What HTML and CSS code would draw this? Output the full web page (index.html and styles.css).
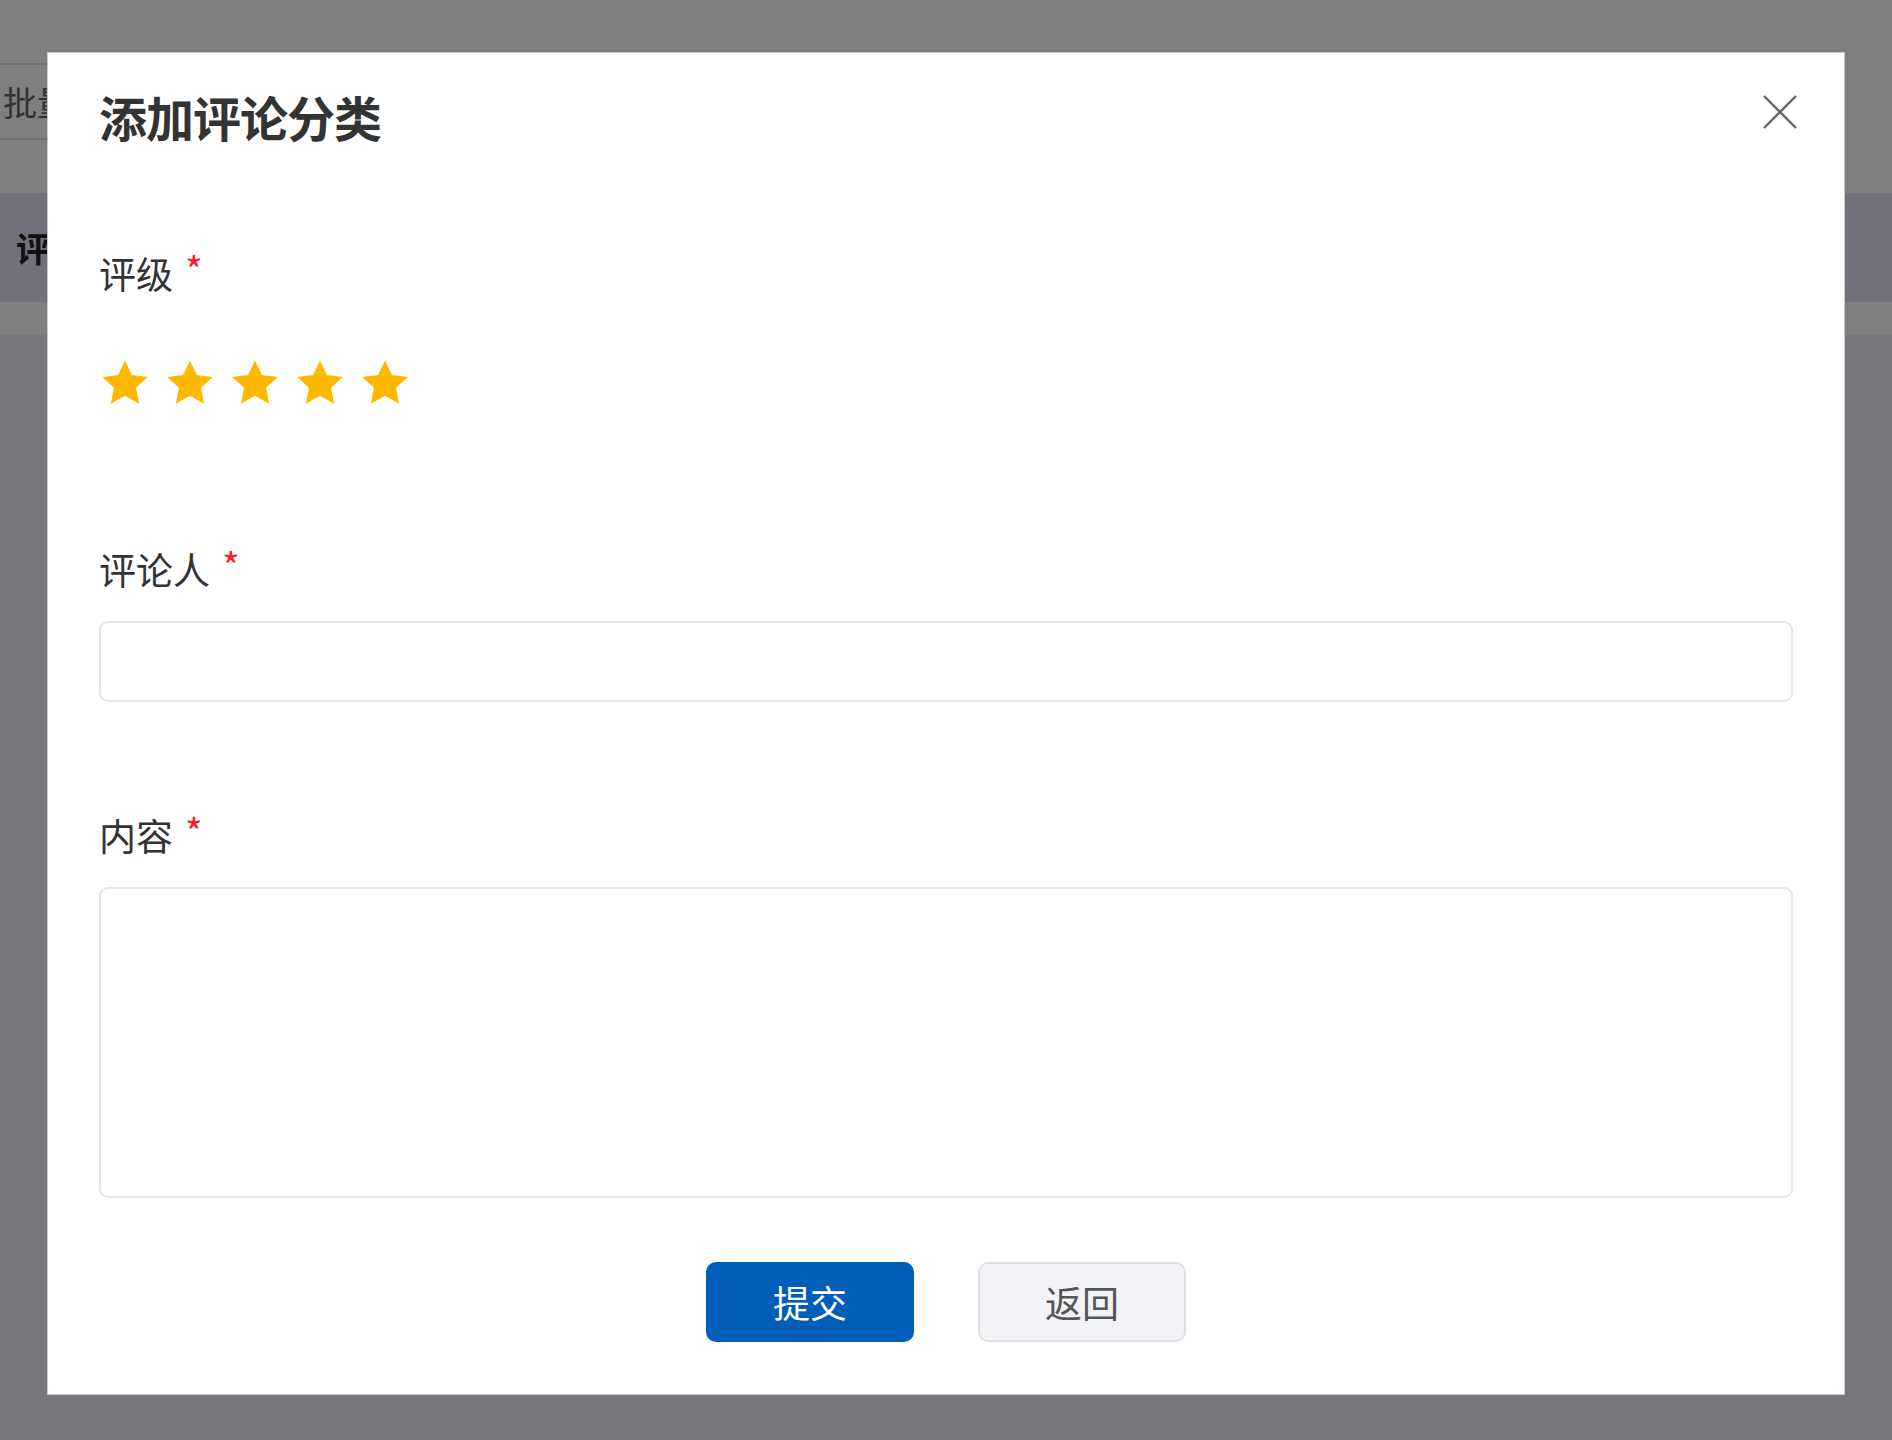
FILE: index.html
```html
<!DOCTYPE html>
<html lang="zh-CN">
<head>
  <meta charset="UTF-8"/>
  <meta name="viewport" content="width=device-width, initial-scale=1.0"/>
  <title>添加评论分类</title>
  <link rel="stylesheet" href="styles.css">
</head>
<body>

  <div class="page">
    <div class="toolbar">
      <div class="batch-btn">批量删除</div>
    </div>
    <div class="table-head">
      <span>评论人</span>
    </div>
    <div class="table-row"></div>
  </div>

  <div class="mask">
    <div class="modal">
      <div class="modal-header">
        <h2>添加评论分类</h2>
        <button class="close-btn" aria-label="关闭">
          <svg width="34" height="34" viewBox="0 0 34 34">
            <path d="M1 1 L33 33 M33 1 L1 33" stroke="#666" stroke-width="2.4" fill="none"/>
          </svg>
        </button>
      </div>

      <div class="form-item">
        <label class="form-label">评级<span class="required">*</span></label>
        <div class="rate">
          <svg class="star" viewBox="0 0 24 24"><path d="M12 1.2l3.3 7 7.6.9-5.6 5.2 1.5 7.6L12 18.1l-6.8 3.8 1.5-7.6L1.1 9.1l7.6-.9z"/></svg>
          <svg class="star" viewBox="0 0 24 24"><path d="M12 1.2l3.3 7 7.6.9-5.6 5.2 1.5 7.6L12 18.1l-6.8 3.8 1.5-7.6L1.1 9.1l7.6-.9z"/></svg>
          <svg class="star" viewBox="0 0 24 24"><path d="M12 1.2l3.3 7 7.6.9-5.6 5.2 1.5 7.6L12 18.1l-6.8 3.8 1.5-7.6L1.1 9.1l7.6-.9z"/></svg>
          <svg class="star" viewBox="0 0 24 24"><path d="M12 1.2l3.3 7 7.6.9-5.6 5.2 1.5 7.6L12 18.1l-6.8 3.8 1.5-7.6L1.1 9.1l7.6-.9z"/></svg>
          <svg class="star" viewBox="0 0 24 24"><path d="M12 1.2l3.3 7 7.6.9-5.6 5.2 1.5 7.6L12 18.1l-6.8 3.8 1.5-7.6L1.1 9.1l7.6-.9z"/></svg>
        </div>
      </div>

      <div class="form-item">
        <label class="form-label">评论人<span class="required">*</span></label>
        <input class="form-input" type="text"/>
      </div>

      <div class="form-item">
        <label class="form-label">内容<span class="required">*</span></label>
        <textarea class="form-textarea"></textarea>
      </div>

      <div class="modal-footer">
        <button class="btn btn-primary">提交</button>
        <button class="btn btn-default">返回</button>
      </div>
    </div>
  </div>

</body>
</html>
```

FILE: styles.css
```css
* {
  box-sizing: border-box;
  margin: 0;
  padding: 0;
}

body {
  font-family: "Noto Sans CJK SC", "Noto Sans", sans-serif;
  background: #eef0f6;
  color: #333;
  height: 1440px;
  overflow: hidden;
}

/* page behind the dialog */
.page {
  background: #fff;
  padding-top: 63px;
}

.toolbar {
  height: 130px;
}

.batch-btn {
  width: 260px;
  height: 77px;
  border-top: 2px solid #ddd;
  border-bottom: 2px solid #ddd;
  padding-left: 3px;
  font-size: 34px;
  line-height: 73px;
  color: #666;
}

.table-head {
  height: 109px;
  background: #e0e2f4;
  padding-left: 16px;
  font-size: 34px;
  font-weight: bold;
  line-height: 109px;
  color: #222;
}

.table-row {
  height: 33px;
  background: #fff;
}

/* dialog */
.mask {
  position: fixed;
  inset: 0;
  background: rgba(0, 0, 0, 0.5);
  display: flex;
  justify-content: center;
  align-items: flex-start;
  padding-top: 52px;
}

.modal {
  position: relative;
  width: 1798px;
  height: 1343px;
  background: #fff;
  border: 1px solid #c8c8c8;
  padding: 27px 51px 0;
}

.modal-header {
  height: 72px;
  margin-bottom: 94px;
}

.modal-header h2 {
  font-size: 48px;
  font-weight: bold;
  line-height: 72px;
  color: #333;
  letter-spacing: -1px;
}

.close-btn {
  position: absolute;
  top: 42px;
  right: 47px;
  width: 34px;
  height: 34px;
  border: none;
  background: none;
  cursor: pointer;
}

.close-btn svg {
  display: block;
}

.form-item {
  margin-bottom: 106px;
}

.form-label {
  display: block;
  font-size: 37px;
  line-height: 54px;
  color: #333;
  margin-bottom: 25px;
}

.required {
  display: inline-block;
  vertical-align: top;
  margin-left: 12px;
  font-size: 38px;
  line-height: 46px;
  color: #f5222d;
}

.rate {
  display: flex;
  gap: 15px;
  padding: 33px 0 28px 1px;
}

.star {
  width: 50px;
  height: 50px;
  fill: #ffb800;
}

.form-input {
  display: block;
  width: 100%;
  height: 81px;
  border: 2px solid #e6e6e6;
  border-radius: 9px;
  background: #fff;
  outline: none;
}

.form-textarea {
  display: block;
  width: 100%;
  height: 311px;
  border: 2px solid #e6e6e6;
  border-radius: 9px;
  background: #fff;
  outline: none;
  resize: none;
}

.modal-footer {
  display: flex;
  justify-content: center;
  gap: 64px;
  margin-top: -42px;
}

.btn {
  width: 208px;
  height: 80px;
  border-radius: 10px;
  font-family: inherit;
  font-size: 37px;
  cursor: pointer;
}

.btn-primary {
  background: #005eb8;
  border: none;
  color: #fff;
}

.btn-default {
  background: #f2f3f6;
  border: 2px solid #e0e0e0;
  color: #555;
}
```
